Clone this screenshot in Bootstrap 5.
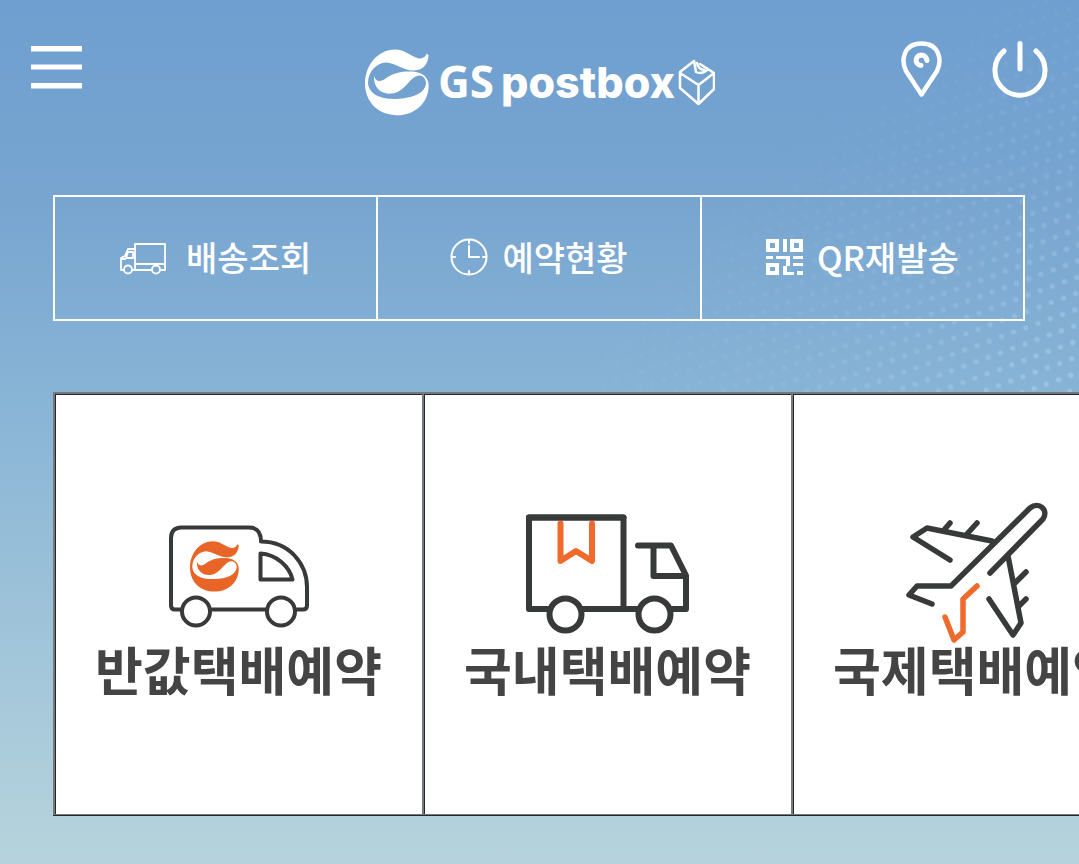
<!DOCTYPE html>
<html lang="ko">
<head>
<meta charset="utf-8">
<meta name="viewport" content="width=device-width, initial-scale=1">
<title>GS Postbox</title>
<link href="https://cdn.jsdelivr.net/npm/bootstrap@5.3.0/dist/css/bootstrap.min.css" rel="stylesheet">
<style>
body{min-height:100vh;overflow-x:hidden;color:#444;font-family:"Noto Sans CJK KR",sans-serif;background:linear-gradient(#6e9fd0 0,#78a5d0 23%,#88b4d6 46%,#b4d2dc 97%,#b6d3dd 100%) no-repeat}
.halftone{right:0;top:0;width:480px;height:400px;z-index:-1}
.topbar{display:grid;grid-template-columns:1fr auto 1fr;padding:40px 31px 0}
.icon-btn{padding:0;border:0;background:none;color:#fff;line-height:0}
.tools{gap:48px}
.quick{margin:75px 54px 0 53px;border:2px solid #fff}
.quick a{color:#fff;height:122px;padding-bottom:2px;font-size:34px;font-weight:500;line-height:40px;white-space:nowrap}
.quick a+a{border-left:2px solid #fff}
.wide-gap{gap:20px}
.near-gap{gap:14px}
.services{margin:71px 0 48px 53px;overflow:hidden}
.service{flex:0 0 369px;padding:101px 0 121px;background:#fff;color:#444;border:solid #76797c;border-width:2px 0 1px 2px;box-shadow:inset 1px 1px #26282a,0 1px #26282a;margin-bottom:1px;font-size:52px;font-weight:700;line-height:48px;white-space:nowrap}
svg{display:block;flex:none}
.stroke-art{fill:none;stroke:currentColor;stroke-linecap:round;stroke-linejoin:round}
.ink{color:#383a39}
.orange{color:#f06a2b}
</style>
</head>
<body>
<svg class="halftone position-absolute" viewBox="0 0 480 400" aria-hidden="true">
<defs>
<pattern id="dots" width="13" height="30" patternUnits="userSpaceOnUse" patternTransform="rotate(-20)"><g fill="#aed0ec"><circle cx="3" cy="4" r="2.700"/><circle cx="9.500" cy="19" r="2.700"/></g></pattern>
<linearGradient id="fade" gradientUnits="userSpaceOnUse" x1="230" y1="100" x2="480" y2="400"><stop stop-color="#fff" stop-opacity="0"/><stop offset=".5" stop-color="#fff" stop-opacity=".2"/><stop offset="1" stop-color="#fff" stop-opacity=".6"/></linearGradient>
<mask id="veil"><path fill="url(#fade)" d="M0 0h480v400H0z"/></mask>
</defs>
<path fill="url(#dots)" mask="url(#veil)" d="M0 0h480v400H0z"/>
</svg>
<svg width="0" height="0" class="position-absolute" aria-hidden="true"><symbol id="emblem" viewBox="45 43 193 199"><path fill="currentColor" d="M72 122C78 142 92 142 108 130C135 110 165 108 195 110C222 114 238 130 237 155C235 205 195 241 142 241C88 241 45 205 45 145C45 90 85 43 135 43C165 43 180 62 204 69C218 72 228 66 231 55L237 60C235 86 222 105 193 106C160 107 140 84 108 82C80 84 54 108 54 145C58 180 95 194 140 192C190 190 226 175 229 145C229 130 218 120 204 122C178 128 165 172 125 176C95 178 70 160 72 122Z"/></symbol></svg>

<header class="topbar align-items-start">
  <button class="icon-btn text-start" type="button" aria-label="메뉴"><svg width="54" height="60" viewBox="31 40 54 60" fill="#fff"><path d="M31 46h51v5.500H31zM31 64.500h51v5H31zM31 83h51v5.500H31z"/></svg></button>
  <a href="#" class="text-white" aria-label="GS postbox">
    <svg width="351" height="80" viewBox="364 40 351 80">
      <use href="#emblem" x="365" y="49" width="64" height="67"/>
      <text x="438" y="98" fill="#fff" font-family="Noto Sans" font-size="44" font-weight="700">GS</text>
      <text x="501" y="98" fill="#fff" font-family="Inter" font-size="43" font-weight="800">postbox</text>
      <path class="stroke-art" stroke-width="2.500" d="M694 61l-14 11v16l18.500 16L714 89V73l-14-9M680 73l18.500 12L714 73M698.500 85v19M694 61l2 11q6 3 12-3M697 63q1 6 7 7"/>
    </svg>
  </a>
  <div class="tools d-flex justify-content-end">
    <button class="icon-btn" type="button" aria-label="위치"><svg width="44" height="60" viewBox="901 40 44 60"><g class="stroke-art" stroke-width="4.500"><path d="M922.500 94.500L907 71C902 61 904 43.500 922.500 43.500S943 61 938 71Z"/><path stroke-width="5" d="M922 65.500c-7-1-6-10 0-10.500q5 0 6 5.500"/></g></svg></button>
    <button class="icon-btn" type="button" aria-label="로그아웃"><svg width="56" height="60" viewBox="992 40 56 60"><path class="stroke-art" stroke-width="5" d="M1004 51A25 25 0 1 0 1036 51M1020 43.500V69"/></svg></button>
  </div>
</header>

<nav class="quick d-flex">
  <a href="#" class="col wide-gap d-flex justify-content-center align-items-center text-decoration-none">
    <svg width="46" height="38" viewBox="123 239 46 38" class="stroke-art" stroke-width="1.800"><path d="M138 245h30v20h-30zM127 271h-3v-12l4-2 3-7h7M129 259l2-6h5v6zM124 260h4M136 271h18M138 265v5M164 271h4v-6"/><circle cx="131" cy="270.500" r="4"/><circle cx="159" cy="270.500" r="4"/></svg>
    <span>배송조회</span></a>
  <a href="#" class="col near-gap d-flex justify-content-center align-items-center text-decoration-none">
    <svg width="38" height="38" viewBox="0 0 38 38" class="stroke-art" stroke-width="2"><circle cx="19" cy="19" r="17.500"/><path d="M19 2v3M19 33v3M2 19h3M33 19h3M19 8v11h10"/></svg>
    <span>예약현황</span></a>
  <a href="#" class="col near-gap d-flex justify-content-center align-items-center text-decoration-none">
    <svg width="37" height="36" viewBox="0 0 37 36" fill="currentColor"><path fill-rule="evenodd" d="M0 0h13v13H0zM4 4v5h5V4zM24 0h13v13H24zM28 4v5h5V4zM0 24h13v12H0zM4 28v4h5v-4zM17 0h4v13h-4zM0 17h7v3H0zM10 17h14v3H10zM27 17h10v3H27zM20 20h4v7h-4zM27 24h10v3H27zM17 27h4v6h7v3H17zM31 32h6v4h-6z"/></svg>
    <span>QR재발송</span></a>
</nav>

<main class="services d-flex">
  <a href="#" class="service d-flex flex-column align-items-center text-decoration-none">
    <svg width="190" height="150" viewBox="144 495 190 150"><g class="stroke-art ink" stroke-width="4"><path d="M181 609.500h-6q-4 0-4-4V538q0-10 10-10.500h68c8 0 12 5 12 14 28 0 46 22 46 46v18q0 4-4 4h-6M212 609.500h54M260.500 553.500V579.500h32c-3-13-16-25-32-26z"/><circle cx="196" cy="611.500" r="14"/><circle cx="281" cy="611.500" r="14"/></g><use href="#emblem" x="190" y="541" width="49" height="51" color="#e86427"/></svg>
    <span>반값택배예약</span></a>
  <a href="#" class="service d-flex flex-column align-items-center text-decoration-none">
    <svg width="190" height="150" viewBox="513 495 190 150"><g class="stroke-art ink" stroke-width="6"><path d="M548 609h-19v-91.500h94.500V609H583M623.500 609H638M638 545.500h33l15 30V609h-14M653.500 547v29H685"/><circle cx="565.500" cy="614.500" r="16"/><circle cx="654.500" cy="614.500" r="16"/></g><path class="stroke-art orange" stroke-width="6" d="M560.500 523.500V561l15.500-10 16 10v-37.500"/><path class="stroke-art ink" stroke-width="6" d="M529 517.500h94.500"/></svg>
    <span>국내택배예약</span></a>
  <a href="#" class="service d-flex flex-column align-items-center text-decoration-none">
    <svg width="190" height="150" viewBox="881 495 190 150"><path class="stroke-art ink" stroke-width="5.500" d="M989 573l53-54c6-9-4-18-13-11l-79 78h-34l-8 9 23 9M991 541l-65-13-14 9 37 23M943 530l6-7M966 534l10-11M1007 556l13 67-8 12-24-36M1014 583l11-11M1018 606l7-7"/><path class="stroke-art orange" stroke-width="5.500" d="M976 586l-14 13v33l-9 8-9-23"/></svg>
    <span>국제택배예약</span></a>
</main>
<script src="https://cdn.jsdelivr.net/npm/bootstrap@5.3.0/dist/js/bootstrap.bundle.min.js"></script>
</body>
</html>
